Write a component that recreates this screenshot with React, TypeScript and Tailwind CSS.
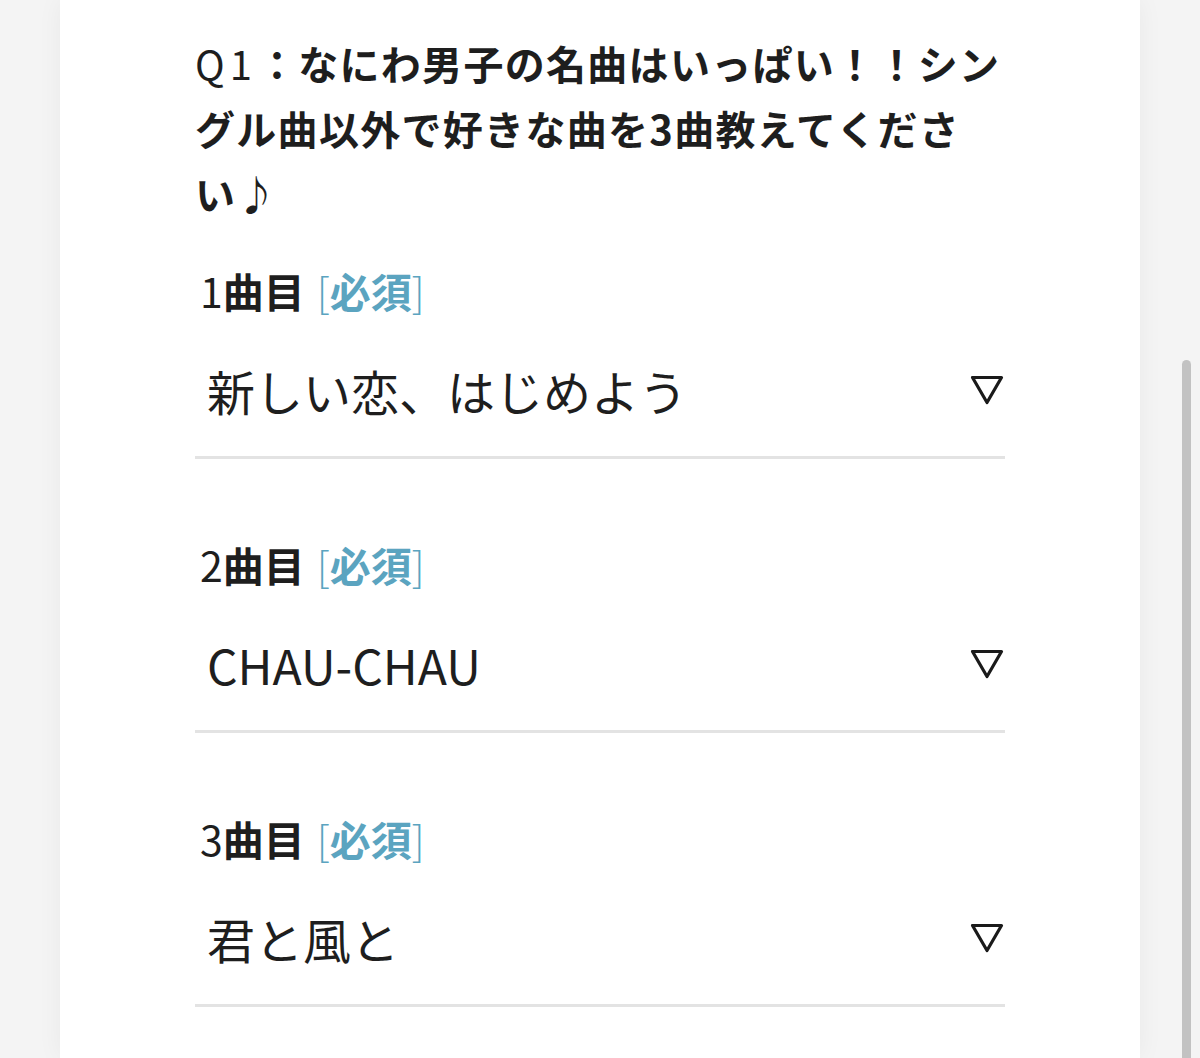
import React from 'react';

const fields = [
  { no: '1', value: '新しい恋、はじめよう' },
  { no: '2', value: 'CHAU-CHAU' },
  { no: '3', value: '君と風と' },
];

const font = { fontFamily: '"Noto Sans CJK JP", "Noto Sans", sans-serif' };

function Triangle() {
  return (
    <svg width="34" height="30" viewBox="0 0 34 30" fill="none" className="shrink-0">
      <path d="M2.5 2.5 H31.5 L17 27.5 Z" stroke="#1a1a1a" strokeWidth="3.2" strokeLinejoin="round" />
    </svg>
  );
}

function SelectField({ no, value }: { no: string; value: string }) {
  return (
    <div>
      <div className="pl-[5px] text-[41px] leading-[48px] text-[#1e1e1e]">
        <span className="font-normal">{no}</span>
        <span className="font-bold">曲目</span>
        <span className="ml-[12px] text-[#5ba4c0]">
          <span className="font-light">[</span>
          <span className="font-bold">必須</span>
          <span className="font-light">]</span>
        </span>
      </div>
      <div className="mt-[48px] flex items-center justify-between pl-[12px] pr-[1px] pb-[38px] border-b-[3px] border-[#e3e3e3]">
        <span className="text-[48px] leading-[56px] text-[#1e1e1e] font-normal">{value}</span>
        <Triangle />
      </div>
    </div>
  );
}

export default function App() {
  return (
    <div className="relative h-[1058px] overflow-hidden bg-[#f4f4f4]" style={font}>
      <div className="ml-[60px] w-[1080px] h-full bg-white shadow-[0_0_24px_rgba(0,0,0,0.05)]">
        <div className="px-[135px] pt-[31px]">
          <h2 className="text-[40px] leading-[65px] tracking-[1.3px] font-bold text-[#1e1e1e]">
            <span className="block whitespace-nowrap">
              <span className="font-normal tracking-[5px]">Q1</span>：なにわ男子の名曲はいっぱい！！シン
            </span>
            <span className="block whitespace-nowrap">グル曲以外で好きな曲を3曲教えてくださ</span>
            <span className="block whitespace-nowrap">い♪</span>
          </h2>
          <div className="mt-[40px] flex flex-col gap-[81px]">
            {fields.map((f) => (
              <SelectField key={f.no} no={f.no} value={f.value} />
            ))}
          </div>
        </div>
      </div>
      {/* scrollbar */}
      <div className="absolute top-[360px] left-[1182px] w-[9px] h-[760px] rounded-full bg-[#c2c2c2]" />
    </div>
  );
}
